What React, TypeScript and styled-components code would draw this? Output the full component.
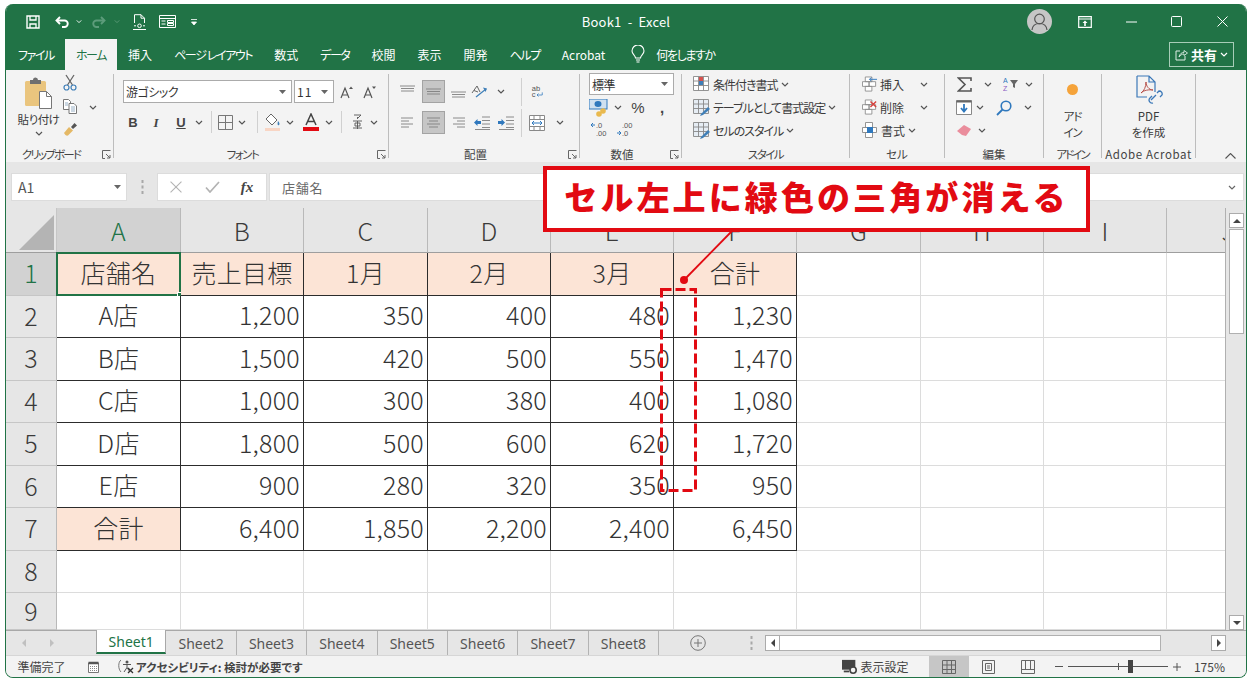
import React from "react";
import styled, { createGlobalStyle } from "styled-components";

const FONT = `"Noto Sans CJK JP", "Noto Sans", sans-serif`;
const RED = "#e20a12";
const GREEN = "#217346";

const GlobalStyle = createGlobalStyle`
  html, body { margin: 0; padding: 0; background: #fff; overflow: hidden; }
  * { box-sizing: border-box; }
  body { font-family: ${FONT}; font-feature-settings: "palt"; color: #333; }
`;

const Page = styled.div`
  position: relative;
  width: 1253px;
  height: 685px;
  padding: 4px 6px 7px 5px;
`;

const Window = styled.div`
  width: 100%;
  height: 100%;
  display: flex;
  flex-direction: column;
  overflow: hidden;
  background: #e6e6e6;
  border: 1px solid ${GREEN};
  border-top: none;
  border-radius: 8px;
`;

/* ---------- title bar ---------- */
const TitleBar = styled.div`
  flex: none;
  height: 35px;
  background: ${GREEN};
  display: grid;
  grid-template-columns: 1fr auto 1fr;
  align-items: center;
  color: #fff;
`;

const QuickAccess = styled.div`
  display: flex;
  align-items: center;
  padding-left: 18px;
`;

const Slot = styled.div<{ $w: number; $h?: number }>`
  flex: none;
  width: ${(p) => p.$w}px;
  height: ${(p) => (p.$h ? `${p.$h}px` : "100%")};
  display: flex;
  align-items: center;
  justify-content: center;
`;

const WindowTitle = styled.div`
  font-size: 13px;
  letter-spacing: 0.2px;
  white-space: pre;
`;

const WindowControls = styled.div`
  display: flex;
  align-items: center;
  justify-content: flex-end;
  padding-right: 8px;
`;

const Avatar = styled.div`
  width: 25px;
  height: 25px;
  border-radius: 50%;
  background: #c6c6c6;
  display: flex;
  align-items: center;
  justify-content: center;
`;

/* ---------- tabs ---------- */
const TabBar = styled.div`
  flex: none;
  height: 31px;
  background: ${GREEN};
  display: flex;
  align-items: stretch;
  padding-left: 1px;
  color: #fff;
  font-size: 12px;
`;

const Tab = styled.div<{ $active?: boolean; $kana?: boolean }>`
  padding: 0 11px;
  display: flex;
  align-items: center;
  white-space: nowrap;
  letter-spacing: ${(p) => (p.$kana ? "-1.4px" : "0")};
  background: ${(p) => (p.$active ? "#f3f3f3" : "transparent")};
  color: ${(p) => (p.$active ? GREEN : "#fff")};
`;

const TellMe = styled.div`
  display: flex;
  align-items: center;
  gap: 11px;
  margin-left: 15px;
  letter-spacing: -1.4px;
`;

const ShareButton = styled.div`
  margin: 3px 12px 3px auto;
  width: 65px;
  border: 1px solid #a8cdb8;
  display: flex;
  align-items: center;
  justify-content: center;
  gap: 3px;
  font-weight: 700;
  font-size: 13px;
`;

/* ---------- ribbon ---------- */
const Ribbon = styled.div`
  flex: none;
  height: 92px;
  background: #f3f3f3;
  display: flex;
  padding-top: 4px;
  font-size: 12px;
  color: #3b3b3b;
`;

const Group = styled.section<{ $w: number }>`
  flex: none;
  width: ${(p) => p.$w}px;
  height: 84px;
  display: flex;
  flex-direction: column;
  border-right: 1px solid #bdbdbd;
`;

const GroupBody = styled.div<{ $pad?: number }>`
  flex: none;
  height: 72px;
  padding-left: ${(p) => p.$pad ?? 0}px;
  display: flex;
  flex-direction: column;
`;

const GroupFoot = styled.div<{ $launcher?: boolean }>`
  flex: none;
  height: 12px;
  display: grid;
  grid-template-columns: ${(p) => (p.$launcher ? "1fr 17px" : "1fr")};
  line-height: 16px;
  font-size: 11.5px;
  white-space: nowrap;
  color: #444;
`;

const FootLabel = styled.span<{ $spacing?: number }>`
  justify-self: center;
  letter-spacing: ${(p) => p.$spacing ?? 0}px;
`;

const Launcher = styled.div`
  justify-self: end;
  padding: 4px 2px 0 0;
  line-height: 0;
`;

const ToolRow = styled.div<{ $h: number; $top?: number }>`
  flex: none;
  height: ${(p) => p.$h}px;
  margin-top: ${(p) => p.$top ?? 0}px;
  display: flex;
  align-items: center;
  white-space: nowrap;
`;

const ClipRow = styled(ToolRow)`
  align-items: flex-start;
`;

const Combo = styled.div<{ $w: number; $mono?: boolean }>`
  flex: none;
  width: ${(p) => p.$w}px;
  height: 100%;
  background: #fff;
  border: 1px solid #ababab;
  display: flex;
  align-items: center;
  justify-content: space-between;
  padding: 0 5px 0 2px;
  font-size: 12px;
  color: #333;
  letter-spacing: ${(p) => (p.$mono ? "1px" : "-0.5px")};
`;

const Divider = styled.div<{ $h?: number }>`
  flex: none;
  width: 1px;
  height: ${(p) => p.$h ?? 22}px;
  background: #d0d0d0;
`;

const Pressed = styled.div`
  width: 23px;
  height: 23px;
  background: #c6c6c6;
  border: 1px solid #a3a3a3;
  display: flex;
  align-items: center;
  justify-content: center;
`;

const PasteColumn = styled.div`
  flex: none;
  width: 54px;
  height: 100%;
  padding: 3px 0 0 11px;
  display: flex;
  flex-direction: column;
  align-items: center;
`;

const ClipTools = styled.div`
  flex: none;
  width: 20px;
  padding-top: 0;
  display: flex;
  flex-direction: column;
  align-items: center;
  gap: 8px;
`;

const BigColumn = styled.div`
  flex: none;
  height: 100%;
  display: flex;
  flex-direction: column;
  align-items: center;
`;

const BigLabel = styled.div<{ $top?: number; $spacing?: number }>`
  font-size: 11.5px;
  line-height: 16px;
  text-align: center;
  margin-top: ${(p) => p.$top ?? 0}px;
  letter-spacing: ${(p) => p.$spacing ?? 0}px;
  white-space: pre-line;
`;

const Face = styled.span<{ $serif?: boolean; $size?: number; $light?: boolean }>`
  font-family: ${(p) => (p.$serif ? `"Liberation Serif", serif` : `"Liberation Sans", sans-serif`)};
  font-weight: ${(p) => (p.$light ? 400 : 700)};
  font-size: ${(p) => p.$size ?? 13}px;
  line-height: 1;
  color: #444;
  font-style: ${(p) => (p.$serif ? "italic" : "normal")};
`;

const Underlined = styled(Face)`
  text-decoration: underline;
`;

const ToolText = styled.span<{ $kana?: boolean }>`
  margin-left: 2px;
  letter-spacing: ${(p) => (p.$kana ? "-1px" : "0")};
`;

const AddinDot = styled.div`
  width: 11px;
  height: 11px;
  border-radius: 50%;
  background: #f5a33a;
`;

const CollapseBox = styled.div`
  flex: 1;
  display: flex;
  align-items: flex-end;
  justify-content: flex-end;
  padding: 0 10px 3px 0;
`;

/* ---------- formula bar ---------- */
const FormulaBar = styled.div`
  flex: none;
  height: 46px;
  display: flex;
  align-items: flex-start;
  padding: 11px 2px 0 5px;
  background: #e6e6e6;
`;

const NameBox = styled.div`
  flex: none;
  width: 116px;
  height: 28px;
  background: #fff;
  border: 1px solid #dcdcdc;
  display: flex;
  align-items: center;
  justify-content: space-between;
  padding: 0 5px 0 6px;
  font-size: 14px;
  color: #555;
`;

const Grip = styled.div`
  flex: none;
  width: 30px;
  height: 28px;
  display: flex;
  align-items: center;
  justify-content: center;
`;

const FxBox = styled.div`
  flex: none;
  width: 110px;
  height: 28px;
  margin-right: 2px;
  background: #fff;
  border: 1px solid #dcdcdc;
  display: grid;
  grid-template-columns: 36px 36px 34px;
  align-items: center;
  justify-items: center;
`;

const FormulaInput = styled.div`
  flex: 1;
  height: 28px;
  background: #fff;
  border: 1px solid #dcdcdc;
  display: flex;
  align-items: center;
  justify-content: space-between;
  padding: 0 7px 0 12px;
  font-size: 13px;
  letter-spacing: 0.8px;
  color: #6a6a6a;
`;

/* ---------- sheet ---------- */
const SheetArea = styled.div`
  flex: none;
  height: 422px;
  display: flex;
  background: #e6e6e6;
`;

const CellGrid = styled.div`
  flex: 1;
  min-width: 0;
  display: grid;
  grid-template-columns: 51px 124px 123px 124px 123px 123px 123px 124px 123px 123px 123px;
  grid-template-rows: 45px repeat(8, 42.5px) 37px;
  overflow: hidden;
  font-size: 25px;
  font-weight: 300;
  letter-spacing: 0.25px;
  line-height: 1;
  font-feature-settings: normal;
`;

const Corner = styled.div`
  background: #e6e6e6;
  border-right: 1px solid #c6c6c6;
  border-bottom: 1px solid #9e9e9e;
  display: flex;
  align-items: flex-end;
  justify-content: flex-end;
  padding: 0 2px 2px 0;
`;

const ColHead = styled.div<{ $sel?: boolean }>`
  background: ${(p) => (p.$sel ? "#d2d2d2" : "#e6e6e6")};
  color: ${(p) => (p.$sel ? GREEN : "#3a3a3a")};
  border-right: 1px solid #b9b9b9;
  border-bottom: 1px solid #9e9e9e;
  display: flex;
  align-items: center;
  justify-content: center;
`;

const RowHead = styled.div<{ $sel?: boolean }>`
  background: ${(p) => (p.$sel ? "#d2d2d2" : "#e6e6e6")};
  color: ${(p) => (p.$sel ? GREEN : "#3a3a3a")};
  border-right: 1px solid #b9b9b9;
  border-bottom: 1px solid #c6c6c6;
  display: flex;
  align-items: center;
  justify-content: center;
  padding-bottom: 2px;
`;

const Cell = styled.div<{ $boxed?: boolean; $fill?: boolean; $right?: boolean }>`
  position: relative;
  background: ${(p) => (p.$fill ? "#fce4d6" : "#fff")};
  border-right: 1px solid ${(p) => (p.$boxed ? "#2c2c2c" : "#dcdcdc")};
  border-bottom: 1px solid ${(p) => (p.$boxed ? "#2c2c2c" : "#dcdcdc")};
  display: flex;
  align-items: center;
  justify-content: ${(p) => (p.$right ? "flex-end" : "center")};
  padding: ${(p) => (p.$right ? "0 3px 3px 0" : "0 0 3px 0")};
  color: #333;
  white-space: nowrap;
`;

const SelectedFrame = styled.div`
  position: absolute;
  inset: -1px;
  border: 2px solid ${GREEN};
`;

const FillHandle = styled.div`
  position: absolute;
  right: -3px;
  bottom: -3px;
  width: 5px;
  height: 5px;
  background: ${GREEN};
  border: 1px solid #fff;
`;

const VScroll = styled.div`
  flex: none;
  width: 21px;
  background: #e6e6e6;
  border-left: 1px solid #b0b0b0;
  display: flex;
  flex-direction: column;
  padding: 5px 0 0 3px;
`;

const VThumb = styled.div`
  width: 15px;
  height: 105px;
  margin: 1px 0 auto;
  background: #fff;
  border: 1px solid #b0b0b0;
`;

const ScrollBtn = styled.div<{ $w: number; $h: number }>`
  flex: none;
  width: ${(p) => p.$w}px;
  height: ${(p) => p.$h}px;
  background: #fff;
  border: 1px solid #ababab;
  display: flex;
  align-items: center;
  justify-content: center;
`;

/* ---------- sheet tabs ---------- */
const SheetTabs = styled.div`
  flex: none;
  height: 25px;
  display: flex;
  align-items: stretch;
  background: #e6e6e6;
  border-top: 1px solid #a8a8a8;
  font-size: 14px;
  color: #555;
`;

const TabNav = styled.div`
  flex: none;
  width: 90px;
  display: flex;
  align-items: center;
  padding-left: 15px;
  gap: 22px;
`;

const SheetTab = styled.div<{ $active?: boolean }>`
  flex: none;
  width: 70.4px;
  margin-top: ${(p) => (p.$active ? "-1px" : "0")};
  height: ${(p) => (p.$active ? "24px" : "auto")};
  display: flex;
  align-items: center;
  justify-content: center;
  font-family: "Noto Sans", sans-serif;
  font-feature-settings: normal;
  background: ${(p) => (p.$active ? "#fff" : "transparent")};
  color: ${(p) => (p.$active ? GREEN : "#555")};
  border-left: ${(p) => (p.$active ? "1px solid #a8a8a8" : "none")};
  border-right: 1px solid ${(p) => (p.$active ? "#a8a8a8" : "#b3b3b3")};
  border-bottom: ${(p) => (p.$active ? `2px solid ${GREEN}` : "none")};
`;

const TabsRest = styled.div`
  flex: 1;
  display: flex;
  align-items: center;
  padding-right: 20px;
`;

const HTrack = styled.div`
  flex: 1;
  height: 16px;
  margin: 0 50px 0 0;
  background: #fff;
  border: 1px solid #b0b0b0;
  border-left: none;
`;

/* ---------- status bar ---------- */
const StatusBar = styled.div`
  flex: 1;
  min-height: 0;
  display: flex;
  align-items: stretch;
  background: #f3f3f3;
  border-top: 1px solid #d6d6d6;
  padding-right: 21px;
  font-size: 12px;
  color: #444;
`;

const StatusItem = styled.div<{ $w?: number; $bold?: boolean; $left?: number }>`
  flex: none;
  width: ${(p) => (p.$w ? `${p.$w}px` : "auto")};
  margin-left: ${(p) => p.$left ?? 0}px;
  display: flex;
  align-items: center;
  justify-content: center;
  gap: 2px;
  font-weight: ${(p) => (p.$bold ? 700 : 400)};
  font-size: ${(p) => (p.$bold ? "11.5px" : "12px")};
  white-space: nowrap;
`;

const StatusSpacer = styled.div`
  flex: 1;
`;

const ViewButton = styled.div<{ $on?: boolean }>`
  flex: none;
  width: 39.5px;
  display: flex;
  align-items: center;
  justify-content: center;
  background: ${(p) => (p.$on ? "#c6c6c6" : "transparent")};
`;

const ZoomTrack = styled.div`
  position: relative;
  flex: none;
  width: 100px;
  height: 1px;
  margin: 0 5px;
  align-self: center;
  background: #555;
`;

const ZoomCenter = styled.div`
  position: absolute;
  left: 50px;
  top: -3px;
  width: 1px;
  height: 7px;
  background: #555;
`;

const ZoomThumb = styled.div`
  position: absolute;
  left: 60px;
  top: -6px;
  width: 5px;
  height: 13px;
  background: #444;
`;

/* ---------- annotation ---------- */
const Callout = styled.div`
  position: absolute;
  left: 543px;
  top: 166px;
  width: 547px;
  height: 66px;
  background: #fff;
  border: 4px solid ${RED};
  display: flex;
  align-items: center;
  justify-content: center;
  color: ${RED};
  font-size: 33px;
  font-weight: 900;
  letter-spacing: 3.1px;
  font-feature-settings: normal;
  white-space: nowrap;
  padding-bottom: 6px;
`;

const Leader = styled.svg`
  position: absolute;
  left: 676px;
  top: 228px;
`;

const DashedFrame = styled.svg`
  position: absolute;
  left: 660px;
  top: 288px;
`;

/* ---------- icons ---------- */
const Chev = ({ c = "#555" }: { c?: string }) => (
  <svg width="8" height="5" viewBox="0 0 8 5"><path d="M1 1l3 3 3-3" fill="none" stroke={c} strokeWidth="1.2" /></svg>
);
const Drop = () => (
  <svg width="7" height="4" viewBox="0 0 7 4"><path d="M0 0h7L3.5 4z" fill="#666" /></svg>
);
const LauncherIcon = () => (
  <svg width="9" height="9" viewBox="0 0 9 9"><path d="M.5 8.5v-8h8M4 4l4 4M8 5v3H5M.5 8.5H3" fill="none" stroke="#666" strokeWidth="1" /></svg>
);
const SaveIcon = () => (
  <svg width="14" height="14" viewBox="0 0 14 14"><path d="M1 1h12v12H1z" fill="none" stroke="#fff" strokeWidth="1.4" /><path d="M4 1v4h6V1M4 13V9h6v4" fill="none" stroke="#fff" strokeWidth="1.3" /></svg>
);
const UndoIcon = ({ c = "#fff", flip }: { c?: string; flip?: boolean }) => (
  <svg width="15" height="12" viewBox="0 0 15 12">
    <g transform={flip ? "matrix(-1 0 0 1 15 0)" : undefined}>
      <path d="M5 1L1.5 4.5 5 8" fill="none" stroke={c} strokeWidth="1.9" />
      <path d="M2 4.5h7.5a3.2 3.2 0 0 1 0 6.5H7" fill="none" stroke={c} strokeWidth="1.9" />
    </g>
  </svg>
);
const PreviewIcon = () => (
  <svg width="13" height="16" viewBox="0 0 13 16"><path d="M1.5 9V.7h6.5l3.5 3.5V9M8 .7v3.5h3.5" fill="none" stroke="#fff" /><path d="M0 15.5h13" stroke="#fff" /><circle cx="6.5" cy="11.8" r="1.8" fill="none" stroke="#fff" /><path d="M1 11.8h2M10 11.8h2" stroke="#fff" /></svg>
);
const FormIcon = () => (
  <svg width="17" height="13" viewBox="0 0 17 13"><path d="M.5.5h16v12H.5z" fill="none" stroke="#fff" /><path d="M.5 3.5h16M2.5 6h4M2.5 9h4M8.5 5.5h6v2h-6zM8.5 8.5h6v2h-6z" fill="none" stroke="#fff" /></svg>
);
const QatMore = () => (
  <svg width="6" height="6" viewBox="0 0 6 6"><path d="M0 .5h6M.5 3h5L3 6z" stroke="#fff" strokeWidth="0.8" fill="#fff" /></svg>
);
const PersonIcon = () => (
  <svg width="17" height="18" viewBox="0 0 17 18"><circle cx="8.5" cy="6" r="4.8" fill="none" stroke="#555" strokeWidth="1.2" /><path d="M1 17c.5-4.5 3.5-6.5 7.5-6.5S15.500 12.500 16 17" fill="none" stroke="#555" strokeWidth="1.2" /></svg>
);
const DisplayIcon = () => (
  <svg width="14" height="12" viewBox="0 0 14 12"><path d="M.7.7h12.600v10.600H.7zM.7 3h12.600" fill="none" stroke="#fff" strokeWidth="1.2" /><path d="M7 4.500l2.500 2.500h-1.700v3H6.200V7H4.500z" fill="#fff" /></svg>
);
const MinIcon = () => (
  <svg width="11" height="2" viewBox="0 0 11 2"><path d="M0 1h11" stroke="#fff" /></svg>
);
const MaxIcon = () => (
  <svg width="11" height="11" viewBox="0 0 11 11"><rect x=".5" y=".5" width="10" height="10" rx="1" fill="none" stroke="#fff" /></svg>
);
const CloseIcon = ({ c = "#fff", s = 11 }: { c?: string; s?: number }) => (
  <svg width={s} height={s} viewBox="0 0 11 11"><path d="M.5.5l10 10M10.500.5l-10 10" stroke={c} strokeWidth="1" /></svg>
);
const BulbIcon = () => (
  <svg width="14" height="19" viewBox="0 0 14 19"><path d="M4.500 13c0-2.500-3.500-4-3.500-7a6 6 0 0 1 12 0c0 3-3.500 4.500-3.500 7z" fill="none" stroke="#fff" strokeWidth="1.100" /><path d="M5 15h4M5.500 17h3" stroke="#fff" strokeWidth="1.200" /></svg>
);
const ShareIcon = () => (
  <svg width="13" height="12" viewBox="0 0 13 12"><path d="M5 2H1v9h9V7" fill="none" stroke="#dfeee6" /><path d="M4 8c.5-3 2.500-4.500 5-4.500V1.500L12.500 4 9 6.500V5C7 5 5.500 6 4 8z" fill="none" stroke="#dfeee6" strokeWidth="0.9" /></svg>
);
const PasteIcon = () => (
  <svg width="29" height="32" viewBox="0 0 29 32">
    <rect x="1" y="4" width="21" height="25" rx="1.500" fill="#eac57e" />
    <path d="M6 3h3a2.500 2.500 0 0 1 5 0h3v4H6z" fill="#6f6f6f" />
    <path d="M15.500 14.500h7l5 5v12h-12z" fill="#fff" stroke="#777" />
    <path d="M22.500 14.500v5h5" fill="none" stroke="#777" />
  </svg>
);
const CutIcon = () => (
  <svg width="14" height="17" viewBox="0 0 14 17"><path d="M3 1l6.500 10M11 1L4.500 11" stroke="#666" strokeWidth="1.300" /><circle cx="3.500" cy="13.500" r="2.500" fill="none" stroke="#3f7fb8" strokeWidth="1.200" /><circle cx="10.500" cy="13.500" r="2.500" fill="none" stroke="#3f7fb8" strokeWidth="1.200" /></svg>
);
const CopyIcon = () => (
  <svg width="14" height="15" viewBox="0 0 14 15"><path d="M.5.500h5l2 2v8h-7z" fill="#fff" stroke="#777" /><path d="M6 4.500h5l2.500 2.500v7.500H6z" fill="#fff" stroke="#777" /><path d="M2 4h3M2 6h3M8 8h4M8 10h4M8 12h4" stroke="#7d9cb8" strokeWidth="0.8" /></svg>
);
const BrushIcon = () => (
  <svg width="15" height="14" viewBox="0 0 15 14"><path d="M1 11l5-6 4 3.500-5 5c-1.500.5-3-.5-4-2.500z" fill="#e4b865" /><path d="M8 5l3.500-4 2.500 2.500-4 3.500z" fill="#555" /></svg>
);
const GrowIcon = ({ up }: { up?: boolean }) => (
  <svg width="14" height="14" viewBox="0 0 14 14"><path d="M1 13L5 3l4 10M2.500 10h5" fill="none" stroke="#555" strokeWidth="1.200" /><path d={up ? "M9 4l2-2.500L13 4z" : "M9 1.500l2 2.500 2-2.500z"} fill="#555" /></svg>
);
const BorderIcon = () => (
  <svg width="15" height="15" viewBox="0 0 15 15"><path d="M.5.500h14v14H.5zM7.500.5v14M.5 7.500h14" fill="none" stroke="#777" /></svg>
);
const FillColorIcon = () => (
  <svg width="18" height="18" viewBox="0 0 18 18"><path d="M7 1l6 6-5 5-6-6z" fill="#fff" stroke="#666" /><path d="M14 8c1.500 2 2 3 1 4s-2 0-1-4z" fill="#3f7fb8" /><rect x="1" y="15" width="15" height="3" fill="#f8d5c4" /></svg>
);
const FontColorIcon = () => (
  <svg width="16" height="18" viewBox="0 0 16 18"><path d="M3 12L8 1l5 11M4.800 8.500h6.400" fill="none" stroke="#444" strokeWidth="1.500" /><rect x="0" y="14" width="16" height="4" fill="#e20a12" /></svg>
);
const FuriganaIcon = () => (
  <svg width="11" height="16" viewBox="0 0 11 16"><path d="M2 1h7L6 4M5.500 3v2M1 7h9M3 9h5v3H3zM1 14h9M5.500 7v8" fill="none" stroke="#555" strokeWidth="0.9" /></svg>
);
const Lines = ({ ys, x }: { ys: number[]; x: [number, number][] }) => (
  <svg width="15" height="15" viewBox="0 0 15 15">
    {ys.map((y, i) => (
      <path key={y} d={`M${x[i][0]} ${y}H${x[i][1]}`} stroke="#7f7f7f" strokeWidth="0.9" />
    ))}
  </svg>
);
const LINE_FULL: [number, number][] = [[0, 15], [1, 14], [1, 14]];
const LINE_LEFT: [number, number][] = [[1, 13], [1, 9], [1, 13], [1, 9]];
const LINE_CENTER: [number, number][] = [[1, 14], [3, 12], [1, 14], [3, 12]];
const LINE_RIGHT: [number, number][] = [[2, 14], [6, 14], [2, 14], [6, 14]];
const OrientIcon = () => (
  <svg width="18" height="16" viewBox="0 0 18 16"><path d="M1 9l5-7 3 6M3 6.500l4 1.500" fill="none" stroke="#666" /><path d="M5 13L15 5" stroke="#3f7fb8" strokeWidth="1.200" /><path d="M12 3.500l4 1-1.500 3.500z" fill="#3f7fb8" /></svg>
);
const IndentIcon = ({ rev }: { rev?: boolean }) => (
  <svg width="16" height="14" viewBox="0 0 16 14">
    <path d="M8 1h8M8 4.500h8M8 8h8M8 11.500h8M1 13.500h15" stroke="#7f7f7f" strokeWidth="0.9" />
    <path d={rev ? "M0 6.500l3.500-3.500v2h3.500v3H3.500v2z" : "M7 6.500L3.500 3v2H0v3h3.500v2z"} fill="#2f78bd" />
  </svg>
);
const WrapIcon = () => (
  <svg width="16" height="18" viewBox="0 0 16 18"><text x="1" y="8" fontSize="10" fill="#555" fontFamily="Liberation Sans">ab</text><text x="1" y="16" fontSize="10" fill="#555" fontFamily="Liberation Sans">c</text><path d="M15 9.500v3.500H8M10 11l-2 2 2 2" fill="none" stroke="#2f78bd" /></svg>
);
const MergeIcon = () => (
  <svg width="16" height="16" viewBox="0 0 16 16"><path d="M.5.500h15v15H.5zM.5 4.500h15M.5 11.500h15M5 .5v4M11 .5v4M5 11.500v4M11 11.500v4" fill="#fff" stroke="#888" /><path d="M3 8h10M5 6l-2 2 2 2M11 6l2 2-2 2" fill="none" stroke="#2f78bd" /></svg>
);
const AccountingIcon = () => (
  <svg width="20" height="18" viewBox="0 0 20 18"><rect x="0" y="0" width="18" height="10" fill="#cfe0f0" stroke="#2f78bd" /><ellipse cx="9" cy="5" rx="3.500" ry="3" fill="#2f78bd" /><circle cx="14" cy="12" r="2.800" fill="#e9b94e" /><circle cx="10" cy="15" r="2.800" fill="#e9b94e" /></svg>
);
const DecimalIcon = ({ more }: { more?: boolean }) => (
  <svg width="16" height="16" viewBox="0 0 16 16">
    <text x="5" y="6.500" fontSize="7.500" fill="#555" fontFamily="Liberation Sans">{more ? ".00" : ".0"}</text>
    <text x="5" y="14.500" fontSize="7.500" fill="#555" fontFamily="Liberation Sans">{more ? ".0" : ".00"}</text>
    <path d={more ? "M0 12h4M2 10l2 2-2 2" : "M4 4H0M2 2L0 4l2 2"} fill="none" stroke="#2f78bd" />
  </svg>
);
const TableIcon = ({ tone }: { tone: "cond" | "table" | "style" }) => (
  <svg width="18" height="17" viewBox="0 0 18 17">
    <path d="M.5.500h15v14H.5zM.5 5h15M.5 9.500h15M5.500.5v14M10.500.5v14" fill={tone === "cond" ? "#fff" : "#e6edf4"} stroke="#888" strokeWidth="0.9" />
    {tone === "cond" && <path d="M6 1h4v4H6z" fill="#d8524f" />}
    {tone === "cond" && <path d="M6 5h4v4H6z" fill="#3f7fb8" />}
    {tone !== "cond" && <path d="M8 15l7-7 2 2-7 6-3 1z" fill="#3f7fb8" />}
  </svg>
);
const CellsIcon = ({ kind }: { kind: "insert" | "delete" | "format" }) => (
  <svg width="17" height="17" viewBox="0 0 17 17">
    <path d="M3.500.5h7v5h-7zM.5 5.500h7v5h-7zM7.500 5.500h7v5h-7zM3.500 10.500h7v5h-7z" fill="#fff" stroke="#888" strokeWidth="0.9" />
    {kind === "insert" && <path d="M8 3h8M8 3l2-2M8 3l2 2" stroke="#2f78bd" fill="none" />}
    {kind === "delete" && <path d="M9 2l6 6M15 2l-6 6" stroke="#d8413d" strokeWidth="1.500" />}
    {kind === "format" && <rect x="5" y="5" width="6" height="6" fill="#2f78bd" />}
  </svg>
);
const SigmaIcon = () => (
  <svg width="15" height="15" viewBox="0 0 15 15"><path d="M14 4V1H1.500L8 7.500 1.500 14H14v-3" fill="none" stroke="#555" strokeWidth="1.600" /></svg>
);
const SortIcon = () => (
  <svg width="16" height="14" viewBox="0 0 16 14"><text x="0" y="6" fontSize="7" fill="#2f78bd" fontFamily="Liberation Sans">A</text><text x="0" y="13.500" fontSize="7" fill="#8a5ac2" fontFamily="Liberation Sans">Z</text><path d="M7 3h8l-3 4v4l-2-1V7z" fill="#666" /></svg>
);
const FillDownIcon = () => (
  <svg width="16" height="15" viewBox="0 0 16 15"><path d="M.5.500h15v14H.5z" fill="#fff" stroke="#888" /><path d="M.5 1.500h15" stroke="#666" strokeWidth="2" /><path d="M8 4v7M5 8l3 3.500L11 8" fill="none" stroke="#2f78bd" strokeWidth="1.800" /></svg>
);
const FindIcon = () => (
  <svg width="16" height="16" viewBox="0 0 16 16"><circle cx="10" cy="6" r="4.800" fill="none" stroke="#2f78bd" strokeWidth="1.600" /><path d="M6.500 9.500L1 15" stroke="#2f78bd" strokeWidth="1.800" /></svg>
);
const EraserIcon = () => (
  <svg width="16" height="13" viewBox="0 0 16 13"><path d="M8 1l7 4-5 7-4-1-5-4z" fill="#ea8d9c" /></svg>
);
const PdfIcon = () => (
  <svg width="28" height="30" viewBox="0 0 28 30">
    <path d="M2 2h12l6 6v10M20 8h-6V2M2 2v21h10" fill="none" stroke="#3b78b8" strokeWidth="1.200" />
    <path d="M6 19c3-2 5-6 5-11 0 4 3 8 7 8-4-.5-9 0-12 3z" fill="none" stroke="#b0423b" strokeWidth="0.900" />
    <path d="M16 26l5-5M18 29a3 3 0 0 1-3-5l2-2M22 19l2-2a3 3 0 0 1 3 4l-2 2" fill="none" stroke="#3b78b8" strokeWidth="1.300" />
  </svg>
);
const UpChevron = () => (
  <svg width="11" height="6" viewBox="0 0 11 6"><path d="M.5 5.500l5-5 5 5" fill="none" stroke="#555" strokeWidth="1.100" /></svg>
);
const GripIcon = () => (
  <svg width="3" height="14" viewBox="0 0 3 14"><path d="M1.500 0v3M1.500 5.500v3M1.500 11v3" stroke="#a8a8a8" strokeWidth="2" /></svg>
);
const CheckIcon = () => (
  <svg width="15" height="12" viewBox="0 0 15 12"><path d="M1 6.500L5 11 14 1" fill="none" stroke="#b3b3b3" strokeWidth="1.700" /></svg>
);
const Triangle = () => (
  <svg width="35" height="35" viewBox="0 0 35 35"><path d="M35 0v35H0z" fill="#b4b4b4" /></svg>
);
const Arrow = ({ dir, c = "#444" }: { dir: "l" | "r" | "u" | "d"; c?: string }) => {
  const d = { l: "M5 0v8L1 4z", r: "M1 0v8l4-4z", u: "M0 5h8L4 1z", d: "M0 1h8L4 5z" }[dir];
  const wide = dir === "u" || dir === "d";
  return <svg width={wide ? 8 : 6} height={wide ? 6 : 8} viewBox={wide ? "0 0 8 6" : "0 0 6 8"}><path d={d} fill={c} /></svg>;
};
const PlusCircle = () => (
  <svg width="16" height="16" viewBox="0 0 16 16"><circle cx="8" cy="8" r="7.300" fill="none" stroke="#777" /><path d="M8 4v8M4 8h8" stroke="#777" /></svg>
);
const MacroIcon = () => (
  <svg width="11" height="12" viewBox="0 0 11 12"><path d="M.5 2h10v9.500H.5z" fill="#fff" stroke="#777" /><path d="M.5.700h10v2.500H.5z" fill="#555" /><path d="M2 5.500h7M2 7.500h7M2 9.500h7" stroke="#888" strokeDasharray="1 1" /></svg>
);
const A11yIcon = () => (
  <svg width="17" height="15" viewBox="0 0 17 15"><path d="M4 1C1 3 1 10 4 13" fill="none" stroke="#777" /><circle cx="10" cy="3" r="1.500" fill="#555" /><path d="M6 5.500h8M10 5.500v3L7 13M10 8.500l3 4.500" fill="none" stroke="#555" /><path d="M11 9l5 5M16 9l-5 5" stroke="#333" strokeWidth="1.300" /></svg>
);
const DisplaySetIcon = () => (
  <svg width="16" height="16" viewBox="0 0 18 16"><rect x="0" y="0" width="15" height="11" fill="#444" /><rect x="2" y="12" width="6" height="2" fill="#444" /><circle cx="12.500" cy="11.500" r="3.500" fill="#f3f3f3" stroke="#444" strokeWidth="1.800" /></svg>
);
const NormalViewIcon = () => (
  <svg width="14" height="14" viewBox="0 0 14 14"><path d="M.5.500h13v13H.5zM.5 5h13M.5 9.500h13M5 .5v13M9.500.5v13" fill="none" stroke="#666" /></svg>
);
const PageViewIcon = () => (
  <svg width="13" height="14" viewBox="0 0 13 14"><path d="M.5.500h12v13H.5z" fill="none" stroke="#666" /><path d="M3.500 3.500h6v7h-6zM5 6h3M5 8h3" fill="none" stroke="#666" /></svg>
);
const BreakViewIcon = () => (
  <svg width="14" height="14" viewBox="0 0 14 14"><path d="M.5.500h13v13H.5zM.5 9.500h13M4.500.5v9M9.500.5v9" fill="none" stroke="#666" /></svg>
);
const Dash = () => (
  <svg width="8" height="1" viewBox="0 0 8 1"><path d="M0 .5h8" stroke="#555" /></svg>
);
const PlusSmall = () => (
  <svg width="8" height="8" viewBox="0 0 8 8"><path d="M0 4h8M4 0v8" stroke="#555" /></svg>
);

/* ---------- data ---------- */
const COLS = ["A", "B", "C", "D", "E", "F", "G", "H", "I", "J"];
const TABS: { label: string; kana?: boolean }[] = [
  { label: "挿入" },
  { label: "ページ レイアウト", kana: true },
  { label: "数式" },
  { label: "データ", kana: true },
  { label: "校閲" },
  { label: "表示" },
  { label: "開発" },
  { label: "ヘルプ", kana: true },
  { label: "Acrobat" },
];
const SHEETS = ["Sheet1", "Sheet2", "Sheet3", "Sheet4", "Sheet5", "Sheet6", "Sheet7", "Sheet8"];
const TABLE: string[][] = [
  ["店舗名", "売上目標", "1月", "2月", "3月", "合計"],
  ["A店", "1,200", "350", "400", "480", "1,230"],
  ["B店", "1,500", "420", "500", "550", "1,470"],
  ["C店", "1,000", "300", "380", "400", "1,080"],
  ["D店", "1,800", "500", "600", "620", "1,720"],
  ["E店", "900", "280", "320", "350", "950"],
  ["合計", "6,400", "1,850", "2,200", "2,400", "6,450"],
];

const Foot = ({ label, launcher, spacing }: { label: string; launcher?: boolean; spacing?: number }) => (
  <GroupFoot $launcher={launcher}>
    <FootLabel $spacing={spacing}>{label}</FootLabel>
    {launcher && <Launcher><LauncherIcon /></Launcher>}
  </GroupFoot>
);

const SheetRows = () => (
  <>
    {Array.from({ length: 9 }, (_, r) => (
      <React.Fragment key={r}>
        <RowHead $sel={r === 0}>{r + 1}</RowHead>
        {COLS.map((_, c) => {
          const row = TABLE[r];
          const text = row?.[c];
          const boxed = !!row && c < 6;
          const fill = boxed && (r === 0 || (r === 6 && c === 0));
          return (
            <Cell key={c} $boxed={boxed} $fill={fill} $right={boxed && r > 0 && c > 0}>
              {text}
              {r === 0 && c === 0 && (
                <SelectedFrame>
                  <FillHandle />
                </SelectedFrame>
              )}
            </Cell>
          );
        })}
      </React.Fragment>
    ))}
  </>
);

const App = () => (
  <Page>
    <GlobalStyle />
    <Window>
      <TitleBar>
        <QuickAccess>
          <Slot $w={18} $h={35}><SaveIcon /></Slot>
          <Slot $w={6} $h={35} />
          <Slot $w={28} $h={35}><UndoIcon /></Slot>
          <Slot $w={6} $h={35}><Chev c="#fff" /></Slot>
          <Slot $w={32} $h={35}><UndoIcon c="#5d9c7b" flip /></Slot>
          <Slot $w={6} $h={35}><Chev c="#5d9c7b" /></Slot>
          <Slot $w={38} $h={35}><PreviewIcon /></Slot>
          <Slot $w={18} $h={35}><FormIcon /></Slot>
          <Slot $w={36} $h={35}><QatMore /></Slot>
        </QuickAccess>
        <WindowTitle>{"Book1  -  Excel"}</WindowTitle>
        <WindowControls>
          <Avatar><PersonIcon /></Avatar>
          <Slot $w={65} $h={35}><DisplayIcon /></Slot>
          <Slot $w={29} $h={35}><MinIcon /></Slot>
          <Slot $w={61} $h={35}><MaxIcon /></Slot>
          <Slot $w={31} $h={35}><CloseIcon /></Slot>
        </WindowControls>
      </TitleBar>

      <TabBar>
        <Tab $kana>ファイル</Tab>
        <Tab $active $kana>ホーム</Tab>
        {TABS.map((t) => <Tab key={t.label} $kana={t.kana}>{t.label}</Tab>)}
        <TellMe><BulbIcon />何をしますか</TellMe>
        <ShareButton><ShareIcon />共有<Chev c="#fff" /></ShareButton>
      </TabBar>

      <Ribbon>
        <Group $w={108}>
          <GroupBody>
            <ClipRow $h={72}>
              <PasteColumn>
                <PasteIcon />
                <BigLabel $top={2} $spacing={-0.5}>貼り付け</BigLabel>
                <Slot $w={10} $h={12}><Chev /></Slot>
              </PasteColumn>
              <ClipTools>
                <CutIcon />
                <CopyIcon />
                <BrushIcon />
              </ClipTools>
              <Slot $w={26} $h={66}><Chev /></Slot>
            </ClipRow>
          </GroupBody>
          <Foot label="クリップボード" launcher spacing={-1.8} />
        </Group>

        <Group $w={275}>
          <GroupBody $pad={9}>
            <ToolRow $h={23} $top={6}>
              <Combo $w={169}>游ゴシック<Drop /></Combo>
              <Slot $w={2} />
              <Combo $w={40} $mono>11<Drop /></Combo>
              <Slot $w={26}><GrowIcon up /></Slot>
              <Slot $w={20}><GrowIcon /></Slot>
            </ToolRow>
            <ToolRow $h={22} $top={8}>
              <Slot $w={20}><Face>B</Face></Slot>
              <Slot $w={26}><Face $serif>I</Face></Slot>
              <Slot $w={24}><Underlined>U</Underlined></Slot>
              <Slot $w={12}><Chev /></Slot>
              <Slot $w={12}><Divider /></Slot>
              <Slot $w={16}><BorderIcon /></Slot>
              <Slot $w={18}><Chev /></Slot>
              <Slot $w={12}><Divider /></Slot>
              <Slot $w={20}><FillColorIcon /></Slot>
              <Slot $w={14}><Chev /></Slot>
              <Slot $w={28}><FontColorIcon /></Slot>
              <Slot $w={8}><Chev /></Slot>
              <Slot $w={16}><Divider /></Slot>
              <Slot $w={16}><FuriganaIcon /></Slot>
              <Slot $w={18}><Chev /></Slot>
            </ToolRow>
          </GroupBody>
          <Foot label="フォント" launcher spacing={-1.5} />
        </Group>

        <Group $w={191}>
          <GroupBody $pad={6}>
            <ToolRow $h={23} $top={6}>
              <Slot $w={24}><Lines ys={[2, 4.5, 7]} x={LINE_FULL} /></Slot>
              <Slot $w={28}><Pressed><Lines ys={[5, 7.5, 10]} x={LINE_FULL} /></Pressed></Slot>
              <Slot $w={22}><Lines ys={[8, 10.5, 13]} x={LINE_FULL} /></Slot>
              <Slot $w={22}><OrientIcon /></Slot>
              <Slot $w={20}><Chev /></Slot>
              <Slot $w={20}><Divider $h={28} /></Slot>
              <Slot $w={12}><WrapIcon /></Slot>
            </ToolRow>
            <ToolRow $h={23} $top={8}>
              <Slot $w={24}><Lines ys={[3, 6, 9, 12]} x={LINE_LEFT} /></Slot>
              <Slot $w={28}><Pressed><Lines ys={[3, 6, 9, 12]} x={LINE_CENTER} /></Pressed></Slot>
              <Slot $w={22}><Lines ys={[3, 6, 9, 12]} x={LINE_RIGHT} /></Slot>
              <Slot $w={26}><IndentIcon rev /></Slot>
              <Slot $w={22}><IndentIcon /></Slot>
              <Slot $w={8}><Divider $h={28} /></Slot>
              <Slot $w={24}><MergeIcon /></Slot>
              <Slot $w={22}><Chev /></Slot>
            </ToolRow>
          </GroupBody>
          <Foot label="配置" launcher />
        </Group>

        <Group $w={102}>
          <GroupBody $pad={9}>
            <ToolRow $h={22} $top={-1}>
              <Combo $w={85}>標準<Drop /></Combo>
            </ToolRow>
            <ToolRow $h={21} $top={2}>
              <Slot $w={20}><AccountingIcon /></Slot>
              <Slot $w={18}><Chev /></Slot>
              <Slot $w={22}><Face $light $size={15}>%</Face></Slot>
              <Slot $w={26}><Face $size={15}>,</Face></Slot>
            </ToolRow>
            <ToolRow $h={20} $top={1}>
              <Slot $w={20}><DecimalIcon /></Slot>
              <Slot $w={32}><DecimalIcon more /></Slot>
            </ToolRow>
          </GroupBody>
          <Foot label="数値" launcher />
        </Group>

        <Group $w={168}>
          <GroupBody $pad={11}>
            <ToolRow $h={22} $top={-1}><TableIcon tone="cond" /><ToolText $kana>条件付き書式</ToolText><Slot $w={14}><Chev /></Slot></ToolRow>
            <ToolRow $h={23} $top={1}><TableIcon tone="table" /><ToolText $kana>テーブルとして書式設定</ToolText><Slot $w={14}><Chev /></Slot></ToolRow>
            <ToolRow $h={23}><TableIcon tone="style" /><ToolText $kana>セルのスタイル</ToolText><Slot $w={14}><Chev /></Slot></ToolRow>
          </GroupBody>
          <Foot label="スタイル" spacing={-1.5} />
        </Group>

        <Group $w={95}>
          <GroupBody $pad={12}>
            <ToolRow $h={22} $top={-1}><CellsIcon kind="insert" /><ToolText>挿入</ToolText><Slot $w={40}><Chev /></Slot></ToolRow>
            <ToolRow $h={23} $top={1}><CellsIcon kind="delete" /><ToolText>削除</ToolText><Slot $w={40}><Chev /></Slot></ToolRow>
            <ToolRow $h={23}><CellsIcon kind="format" /><ToolText>書式</ToolText><Slot $w={14}><Chev /></Slot></ToolRow>
          </GroupBody>
          <Foot label="セル" />
        </Group>

        <Group $w={99}>
          <GroupBody $pad={11}>
            <ToolRow $h={22} $top={-1}>
              <Slot $w={16}><SigmaIcon /></Slot>
              <Slot $w={31}><Chev /></Slot>
              <Slot $w={16}><SortIcon /></Slot>
              <Slot $w={20}><Chev /></Slot>
            </ToolRow>
            <ToolRow $h={23} $top={1}>
              <Slot $w={16}><FillDownIcon /></Slot>
              <Slot $w={16}><Chev /></Slot>
              <Slot $w={31}><FindIcon /></Slot>
              <Slot $w={17}><Chev /></Slot>
            </ToolRow>
            <ToolRow $h={23}>
              <Slot $w={16}><EraserIcon /></Slot>
              <Slot $w={20}><Chev /></Slot>
            </ToolRow>
          </GroupBody>
          <Foot label="編集" />
        </Group>

        <Group $w={58}>
          <GroupBody>
            <BigColumn>
              <Slot $w={57} $h={30}><AddinDot /></Slot>
              <BigLabel $top={4} $spacing={-1}>{"アド\nイン"}</BigLabel>
            </BigColumn>
          </GroupBody>
          <Foot label="アドイン" spacing={-2} />
        </Group>

        <Group $w={94}>
          <GroupBody>
            <BigColumn>
              <PdfIcon />
              <BigLabel $top={4}>{"PDF\nを作成"}</BigLabel>
            </BigColumn>
          </GroupBody>
          <Foot label="Adobe Acrobat" spacing={0.6} />
        </Group>

        <CollapseBox><UpChevron /></CollapseBox>
      </Ribbon>

      <FormulaBar>
        <NameBox>A1<Drop /></NameBox>
        <Grip><GripIcon /></Grip>
        <FxBox>
          <CloseIcon c="#b3b3b3" s={12} />
          <CheckIcon />
          <Face $serif $size={15}>fx</Face>
        </FxBox>
        <FormulaInput>店舗名<Chev c="#666" /></FormulaInput>
      </FormulaBar>

      <SheetArea>
        <CellGrid>
          <Corner><Triangle /></Corner>
          {COLS.map((c, i) => <ColHead key={c} $sel={i === 0}>{c}</ColHead>)}
          <SheetRows />
        </CellGrid>
        <VScroll>
          <ScrollBtn $w={15} $h={15}><Arrow dir="u" /></ScrollBtn>
          <VThumb />
          <ScrollBtn $w={15} $h={15}><Arrow dir="d" /></ScrollBtn>
        </VScroll>
      </SheetArea>

      <SheetTabs>
        <TabNav>
          <Arrow dir="l" c="#c0c0c0" />
          <Arrow dir="r" c="#c0c0c0" />
        </TabNav>
        {SHEETS.map((s, i) => <SheetTab key={s} $active={i === 0}>{s}</SheetTab>)}
        <TabsRest>
          <Slot $w={78}><PlusCircle /></Slot>
          <Slot $w={28}><GripIcon /></Slot>
          <ScrollBtn $w={15} $h={16}><Arrow dir="l" /></ScrollBtn>
          <HTrack />
          <ScrollBtn $w={15} $h={16}><Arrow dir="r" /></ScrollBtn>
        </TabsRest>
      </SheetTabs>

      <StatusBar>
        <StatusItem $w={71}>準備完了</StatusItem>
        <StatusItem $w={32}><MacroIcon /></StatusItem>
        <StatusItem $bold $left={8}><A11yIcon />アクセシビリティ: 検討が必要です</StatusItem>
        <StatusSpacer />
        <StatusItem><DisplaySetIcon />表示設定</StatusItem>
        <Slot $w={21} />
        <ViewButton $on><NormalViewIcon /></ViewButton>
        <ViewButton><PageViewIcon /></ViewButton>
        <ViewButton><BreakViewIcon /></ViewButton>
        <Slot $w={7} />
        <StatusItem><Dash /></StatusItem>
        <ZoomTrack><ZoomCenter /><ZoomThumb /></ZoomTrack>
        <StatusItem><PlusSmall /></StatusItem>
        <StatusItem $left={13}>175%</StatusItem>
      </StatusBar>
    </Window>

    <Leader width="64" height="60" viewBox="0 0 64 60">
      <path d="M57 2L8 52" stroke={RED} strokeWidth="1.800" />
      <circle cx="8" cy="52" r="4" fill={RED} />
    </Leader>
    <DashedFrame width="37" height="204" viewBox="0 0 37 204">
      <rect x="1.5" y="1.5" width="34" height="201" fill="none" stroke={RED} strokeWidth="3" strokeDasharray="10 4" />
    </DashedFrame>
    <Callout>セル左上に緑色の三角が消える</Callout>
  </Page>
);

export default App;
